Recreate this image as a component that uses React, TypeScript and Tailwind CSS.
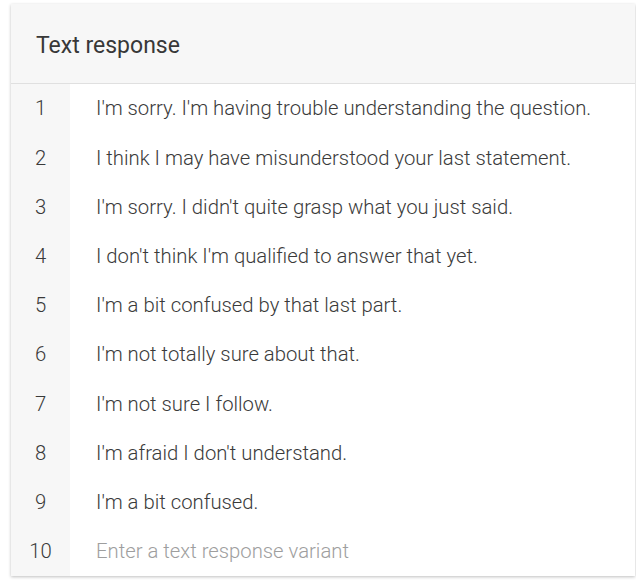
import React from 'react';

const responses = [
  "I'm sorry. I'm having trouble understanding the question.",
  'I think I may have misunderstood your last statement.',
  "I'm sorry. I didn't quite grasp what you just said.",
  "I don't think I'm qualified to answer that yet.",
  "I'm a bit confused by that last part.",
  "I'm not totally sure about that.",
  "I'm not sure I follow.",
  "I'm afraid I don't understand.",
  "I'm a bit confused.",
];

export default function App() {
  return (
    <div className="min-h-[585px] bg-white pl-[11px] pt-[4px]" style={{ fontFamily: 'Roboto, "Liberation Sans", sans-serif' }}>
      <div className="w-[624px] bg-white shadow-[0_1px_3px_rgba(0,0,0,0.25)]">
        <div className="flex h-[80px] items-center border-b border-[#e0e0e0] bg-[#f7f7f7] pl-[25px] pt-[5px] text-[23px] text-[#383838]">
          Text response
        </div>
        {responses.map((text, i) => (
          <div key={i} className="flex h-[49.2px] items-center">
            <div className="flex h-full w-[59px] items-center justify-center bg-[#f7f7f7] text-[20.3px] font-light text-[#3a3a3a]">
              {i + 1}
            </div>
            <div className="pl-[26px] text-[20.3px] font-light text-[#3a3a3a]">{text}</div>
          </div>
        ))}
        <div className="flex h-[49.2px] items-center">
          <div className="flex h-full w-[59px] items-center justify-center bg-[#f7f7f7] text-[20.3px] font-light text-[#3a3a3a]">
            10
          </div>
          <input
            placeholder="Enter a text response variant"
            className="ml-[26px] flex-1 bg-transparent text-[20.3px] font-light text-[#3a3a3a] placeholder-[#9e9e9e] outline-none"
          />
        </div>
      </div>
    </div>
  );
}
